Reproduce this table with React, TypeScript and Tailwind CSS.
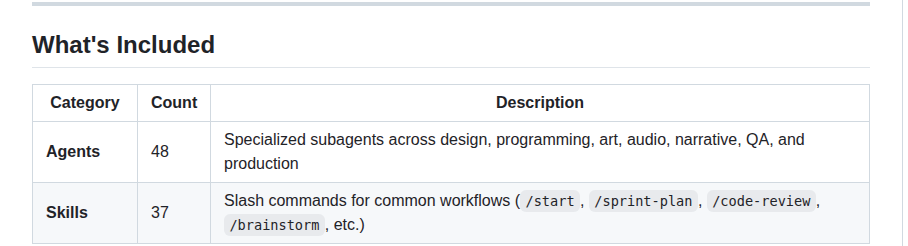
import React from 'react';

const font = "font-['Liberation_Sans',Arial,sans-serif]";
const cell = "border border-[#d1d9e0] px-[13px] py-[6px]";

const Code: React.FC<{ children: React.ReactNode }> = ({ children }) => (
  <code className="font-['DejaVu_Sans_Mono',monospace] text-[13.6px] bg-[#818b981f] rounded-md px-[5.4px] py-[2.7px]">
    {children}
  </code>
);

const ROWS = [
  {
    name: 'Agents',
    count: 48,
    desc: <>Specialized subagents across design, programming, art, audio, narrative, QA, and production</>,
  },
  {
    name: 'Skills',
    count: 37,
    desc: (
      <>
        Slash commands for common workflows (<Code>/start</Code>, <Code>/sprint-plan</Code>,{' '}
        <Code>/code-review</Code>, <Code>/brainstorm</Code>, etc.)
      </>
    ),
  },
];

export default function App() {
  return (
    <div className={`w-[908px] h-[246px] overflow-hidden bg-white text-[#1f2328] ${font}`}>
      <div className="w-[903px] h-full border-r border-[#d1d9e0] px-8 pt-0.5">
        {/* section rule */}
        <div className="h-1 bg-[#d1d9e0]" />

        <h2 className="mt-6 mb-4 pb-[7px] border-b border-[#d1d9e0b3] text-2xl leading-[1.25] font-semibold">
          What's Included
        </h2>

        <table className="w-full border-collapse table-fixed text-base leading-6">
          <colgroup>
            <col className="w-[105px]" />
            <col className="w-[73px]" />
            <col />
          </colgroup>
          <thead>
            <tr className="bg-white">
              <th className={`${cell} font-semibold text-center`}>Category</th>
              <th className={`${cell} font-semibold text-center`}>Count</th>
              <th className={`${cell} font-semibold text-center`}>Description</th>
            </tr>
          </thead>
          <tbody>
            {ROWS.map((r, i) => (
              <tr key={r.name} className={i % 2 === 1 ? 'bg-[#f6f8fa]' : 'bg-white'}>
                <td className={`${cell} font-semibold`}>{r.name}</td>
                <td className={cell}>{r.count}</td>
                <td className={cell}>{r.desc}</td>
              </tr>
            ))}
          </tbody>
        </table>
      </div>
    </div>
  );
}
